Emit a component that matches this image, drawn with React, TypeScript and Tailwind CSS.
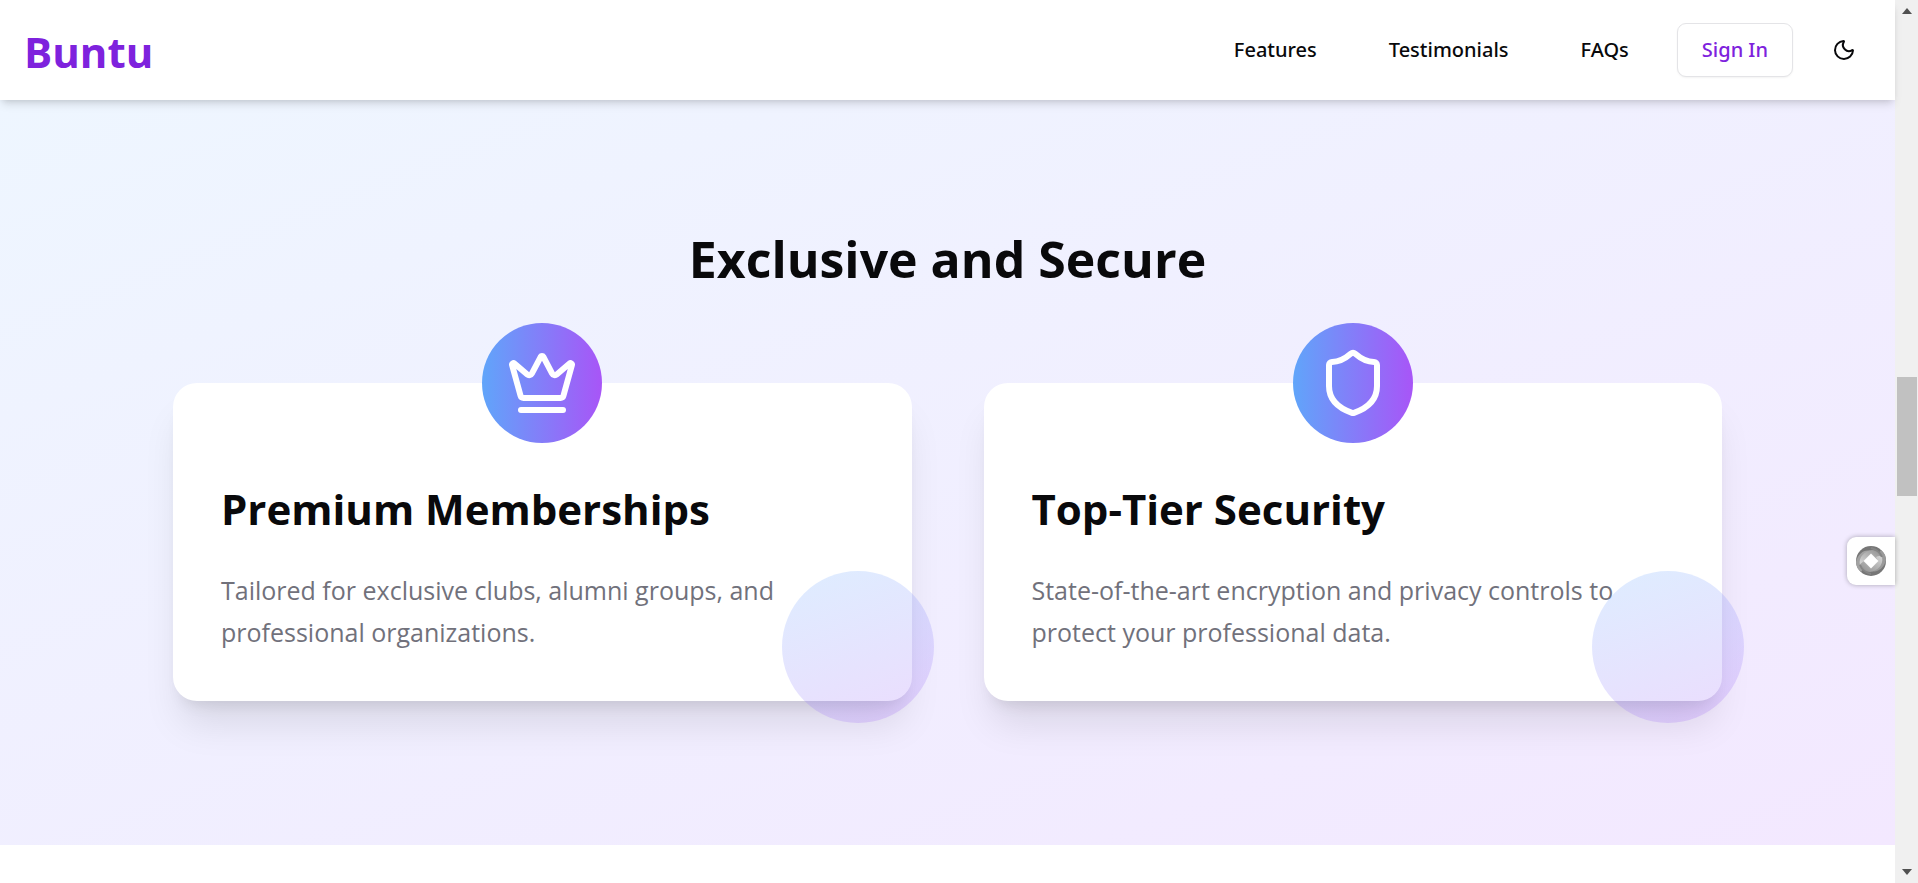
import { Crown, Moon, Shield, type LucideIcon } from "lucide-react";

const navLinks = [
  { label: "Features", href: "#features" },
  { label: "Testimonials", href: "#testimonials" },
  { label: "FAQs", href: "#faqs" },
];

type Feature = { title: string; description: string; icon: LucideIcon };

const features: Feature[] = [
  {
    title: "Premium Memberships",
    description: "Tailored for exclusive clubs, alumni groups, and professional organizations.",
    icon: Crown,
  },
  {
    title: "Top-Tier Security",
    description: "State-of-the-art encryption and privacy controls to protect your professional data.",
    icon: Shield,
  },
];

function Header() {
  return (
    <header className="relative z-10 flex h-[100px] shrink-0 items-center justify-between bg-white/95 px-6 shadow-[0_6px_9px_-2px_rgba(0,0,0,0.12),0_3px_6px_-3px_rgba(0,0,0,0.12)]">
      <a href="#home" className="pt-1 text-[42px] leading-[54px] font-bold text-[#7e22dd]">
        Buntu
      </a>
      <nav className="flex items-center gap-6 font-['Noto_Sans','Open_Sans',sans-serif]">
        {navLinks.map((link) => (
          <a key={link.label} href={link.href} className="px-6 text-[20px] leading-[30px] font-medium">
            {link.label}
          </a>
        ))}
        <button
          type="button"
          className="flex h-[54px] items-center rounded-[9px] border border-zinc-200 bg-white px-6 text-[20px] leading-[30px] font-medium text-[#7e22dd] shadow-xs"
        >
          Sign In
        </button>
        <button type="button" aria-label="Toggle theme" className="flex size-[54px] items-center justify-center">
          <Moon className="size-6" />
        </button>
      </nav>
    </header>
  );
}

function FeatureCard({ title, description, icon: Icon }: Feature) {
  return (
    <article className="relative rounded-3xl bg-white px-12 pt-24 pb-12 shadow-[0_30px_38px_-8px_rgba(0,0,0,0.1),0_12px_15px_-9px_rgba(0,0,0,0.1)]">
      <div className="absolute -top-15 left-1/2 flex size-30 -translate-x-1/2 items-center justify-center rounded-full bg-linear-to-r/srgb from-[#60a5fa] to-[#a855f7] text-white">
        <Icon className="size-18" />
      </div>
      <h3 className="text-[42px] leading-[60px] font-bold">{title}</h3>
      <p className="mt-[30px] text-[25px] leading-[42px] text-zinc-500">{description}</p>
      <div className="absolute -right-[22px] -bottom-[22px] size-[152px] rounded-full bg-linear-160/srgb from-[#58a4ff] to-[#a050f7] opacity-20" />
    </article>
  );
}

function AssistantTab() {
  return (
    <button
      type="button"
      aria-label="Open assistant"
      className="absolute top-[537px] right-0 z-20 flex h-12 w-12 items-center justify-center rounded-l-[9px] bg-white shadow-[0_0_5px_rgba(0,0,0,0.3)]"
    >
      <svg viewBox="0 0 30 30" className="size-[30px]" aria-hidden="true">
        <defs>
          <linearGradient id="upper-band" x1="0" y1="1" x2="1" y2="0">
            <stop offset="0" stopColor="#dcdcdc" />
            <stop offset="1" stopColor="#8c8c8c" />
          </linearGradient>
          <linearGradient id="lower-band" x1="0" y1="1" x2="1" y2="0">
            <stop offset="0" stopColor="#8c8c8c" />
            <stop offset="1" stopColor="#d6d6d6" />
          </linearGradient>
        </defs>
        <circle cx="15" cy="15" r="15" fill="#767676" />
        <path d="M0 16C2 8 8 3 15 5L24 12L22 15L15 8L8 15L10 19L5 26Q0 22 0 16Z" fill="#a2a2a2" />
        <path d="M30 14C28 22 22 27 15 25L6 18L8 15L15 22L22 15L20 11L25 4Q30 8 30 14Z" fill="#9a9a9a" />
        <path d="M4 19C2 11 9 5 16 4C21 4 25 7 27 11L22 15L15 8L8 15L10 19Q6 21 4 19Z" fill="url(#upper-band)" />
        <path d="M26 11C28 19 21 25 14 26C9 26 5 23 3 19L8 15L15 22L22 15L20 11Q24 9 26 11Z" fill="url(#lower-band)" />
        <path d="M4 19C6 24 11 27 15 28M26 11C24 6 19 3 15 2" fill="none" stroke="#858585" strokeWidth="2" />
        <path d="M15 7.5L22.5 15L15 22.5L7.5 15Z" fill="#ffffff" />
      </svg>
    </button>
  );
}

function Scrollbar() {
  return (
    <div aria-hidden="true" className="flex w-[23px] shrink-0 flex-col items-center justify-between bg-[#f0f0f0] py-2">
      <svg viewBox="0 0 10 6" className="h-[6px] w-[10px]"><path d="M0 6L5 0 10 6Z" fill="#505050" /></svg>
      <div className="mt-[363px] mb-auto h-[119px] w-[20px] bg-[#c1c1c1]" />
      <svg viewBox="0 0 10 6" className="h-[6px] w-[10px]"><path d="M0 0L5 6 10 0Z" fill="#505050" /></svg>
    </div>
  );
}

export default function App() {
  return (
    <div className="flex h-screen overflow-hidden bg-white font-['Open_Sans','Noto_Sans',sans-serif] text-zinc-950">
      <div className="relative flex min-w-0 flex-1 flex-col">
        <Header />
        <main>
          <section className="bg-linear-to-br/srgb from-[#eef6ff] to-[#f3e8ff] px-6 pt-32 pb-36">
            <h2 className="text-center text-[50px] leading-[62px] font-bold">Exclusive and Secure</h2>
            <div className="mx-auto mt-[93px] grid max-w-[1549px] grid-cols-2 gap-18">
              {features.map((feature) => (
                <FeatureCard key={feature.title} {...feature} />
              ))}
            </div>
          </section>
        </main>
        <AssistantTab />
      </div>
      <Scrollbar />
    </div>
  );
}
